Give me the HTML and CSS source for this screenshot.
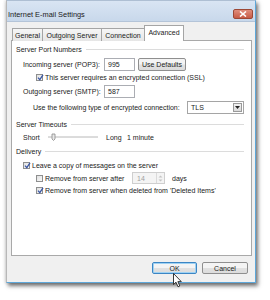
FILE: index.html
```html
<!DOCTYPE html>
<html>
<head>
<meta charset="utf-8">
<link rel="stylesheet" href="styles.css">
</head>
<body>
<div class="window">
  <div class="titlebar">
    <span class="title">Internet E-mail Settings</span>
    <span class="close"><svg width="8" height="6" viewBox="0 0 8 6"><path d="M1 0.5 L7 5.5 M7 0.5 L1 5.5" stroke="#fff" stroke-width="1.6"/></svg></span>
  </div>
  <div class="body">
    <div class="tabs">
      <div class="tab t1">General</div>
      <div class="tab t2">Outgoing Server</div>
      <div class="tab t3">Connection</div>
      <div class="tab sel">Advanced</div>
    </div>
    <div class="panel">
      <div class="group g1"><span>Server Port Numbers</span><i></i></div>
      <div class="row r-in">
        <span class="lbl">Incoming server (POP3):</span>
        <span class="input">995</span>
        <span class="btn small">Use Defaults</span>
      </div>
      <div class="row r-ssl ind2">
        <span class="cb on"><svg width="7" height="7" viewBox="0 0 7 7"><path d="M1 3.6 L2.8 5.6 L6 0.8" fill="none" stroke="#3a57a4" stroke-width="1.3"/></svg></span>
        <span>This server requires an encrypted connection (SSL)</span>
      </div>
      <div class="row r-out">
        <span class="lbl">Outgoing server (SMTP):</span>
        <span class="input">587</span>
      </div>
      <div class="row r-enc">
        <span class="enc-lbl">Use the following type of encrypted connection:</span>
        <span class="select"><span class="val">TLS</span><span class="drop"><svg width="5" height="3" viewBox="0 0 5 3"><path d="M0 0 H5 L2.5 3 Z" fill="#222"/></svg></span></span>
      </div>
      <div class="group g2"><span>Server Timeouts</span><i></i></div>
      <div class="row r-slider">
        <span class="short">Short</span>
        <span class="slider"><svg width="50" height="8" viewBox="0 0 50 8"><line x1="0" y1="4" x2="50" y2="4" stroke="#b8b8b8" stroke-width="1"/><path d="M4 1 V6 L5.5 7.5 L7 6 V1 Z" fill="#e8e8e8" stroke="#8a8a8a" stroke-width="0.8"/></svg></span>
        <span class="long">Long</span>
        <span>1 minute</span>
      </div>
      <div class="group g3"><span>Delivery</span><i></i></div>
      <div class="row r-leave ind1">
        <span class="cb on"><svg width="7" height="7" viewBox="0 0 7 7"><path d="M1 3.6 L2.8 5.6 L6 0.8" fill="none" stroke="#3a57a4" stroke-width="1.3"/></svg></span>
        <span>Leave a copy of messages on the server</span>
      </div>
      <div class="row r-after ind2">
        <span class="cb"></span>
        <span class="after-lbl">Remove from server after</span>
        <span class="spin"><span class="sval">14</span><span class="arrows"><svg width="5" height="9" viewBox="0 0 5 9"><path d="M0.5 3.5 L2.5 1.5 L4.5 3.5 Z M0.5 5.5 L2.5 7.5 L4.5 5.5 Z" fill="#c4c4c4"/></svg></span></span>
        <span class="days">days</span>
      </div>
      <div class="row r-del ind2">
        <span class="cb on"><svg width="7" height="7" viewBox="0 0 7 7"><path d="M1 3.6 L2.8 5.6 L6 0.8" fill="none" stroke="#3a57a4" stroke-width="1.3"/></svg></span>
        <span>Remove from server when deleted from 'Deleted Items'</span>
      </div>
    </div>
    <div class="buttons">
      <span class="btn ok">OK</span>
      <span class="btn cancel">Cancel</span>
    </div>
  </div>
  <svg class="cursor" width="10" height="15" viewBox="0 0 10 15"><path d="M0.5 0.5 V11.5 L3 9.2 L5 13.8 L6.8 13 L4.9 8.6 L8.3 8.6 Z" fill="#fff" stroke="#222" stroke-width="0.9" stroke-linejoin="round"/></svg>
</div>
</body>
</html>
```
FILE: styles.css
```css
html, body {
  margin: 0;
  padding: 0;
  background: #fff;
  width: 270px;
  height: 300px;
  overflow: hidden;
}
body {
  font-family: "Liberation Sans", Arial, sans-serif;
  font-size: 7px;
  color: #222;
}
.window {
  position: relative;
  margin-left: 6px;
  width: 250px;
  height: 283px;
  box-sizing: border-box;
  border: 1px solid;
  border-color: #aebfd3 #5da7d9 #5da7d9 #b8b8b8;
  background: #f0f0f0;
  box-shadow: 2px 3px 4px rgba(0,0,0,0.55), -1px 0 3px rgba(0,0,0,0.15);
  display: flex;
  flex-direction: column;
}
.titlebar {
  height: 21px;
  box-sizing: border-box;
  padding: 6px 2px 0 1px;
  display: flex;
  align-items: center;
  background: linear-gradient(#d9e5f3, #c8d8eb);
  border-bottom: 1px solid #b4c4d8;
}
.title {
  font-size: 7.4px;
  color: #1a1a1a;
}
.close {
  margin-left: auto;
  width: 20px;
  height: 10px;
  border-radius: 2px;
  background: linear-gradient(#e08d7c, #c75b46);
  border: 1px solid #9c4836;
  box-sizing: border-box;
  display: flex;
  align-items: center;
  justify-content: center;
}
.body {
  flex: 1;
  display: flex;
  flex-direction: column;
  padding: 3px 3px 0 4px;
}
.tabs {
  display: flex;
  height: 16px;
  margin-left: 1px;
  align-items: flex-end;
  position: relative;
  z-index: 2;
  margin-bottom: -1px;
}
.tab {
  height: 13px;
  box-sizing: border-box;
  border: 1px solid #a5a5a5;
  border-bottom: none;
  background: linear-gradient(#f6f6f6, #e6e6e6);
  display: flex;
  align-items: center;
  justify-content: center;
  margin-right: -1px;
}
.t1 { width: 31px; }
.t2 { width: 60px; }
.t3 { width: 44px; }
.tab.sel {
  width: 40px;
  height: 16px;
  background: #fff;
  padding-bottom: 2px;
}
.panel {
  height: 216px;
  box-sizing: border-box;
  border: 1px solid #a9a9a9;
  background: #fff;
  padding: 0 7px 0 4px;
  display: flex;
  flex-direction: column;
}
.group {
  display: flex;
  align-items: center;
  height: 10px;
}
.group i {
  flex: 1;
  height: 0;
  border-top: 1px solid #dcdcdc;
  margin-left: 4px;
}
.g1 { margin-top: 3px; }
.g2 { margin-top: 5px; }
.g3 { margin-top: 4px; }
.row {
  display: flex;
  align-items: center;
  padding-left: 7px;
}
.ind1 { padding-left: 7px; }
.ind2 { padding-left: 20px; }
.lbl { width: 81px; }
.input {
  width: 31px;
  height: 13px;
  box-sizing: border-box;
  border: 1px solid #abadb3;
  background: #fff;
  padding-left: 3px;
  display: flex;
  align-items: center;
}
.btn {
  box-sizing: border-box;
  border: 1px solid #8f8f8f;
  border-radius: 2px;
  background: linear-gradient(#f4f4f4 45%, #e1e1e1 55%, #dcdcdc);
  display: flex;
  align-items: center;
  justify-content: center;
}
.btn.small {
  width: 48px;
  height: 13px;
  margin-left: 3px;
  margin-top: 1px;
}
.r-in { margin-top: 3px; height: 14px; }
.r-ssl { margin-top: 1px; height: 11px; }
.r-out { margin-top: 2px; height: 13px; }
.r-enc { margin-top: 3px; height: 13px; padding-left: 17px; }
.enc-lbl { flex: 1; }
.select {
  width: 57px;
  height: 13px;
  box-sizing: border-box;
  border: 1px solid #a5a5a5;
  background: #fff;
  display: flex;
  align-items: center;
}
.select .val { flex: 1; padding-left: 3px; }
.drop {
  width: 9px;
  height: 9px;
  margin-right: 1px;
  box-sizing: border-box;
  border: 1px solid #9a9a9a;
  background: linear-gradient(#f2f2f2, #dadada);
  display: flex;
  align-items: center;
  justify-content: center;
}
.r-slider { margin-top: 3px; height: 10px; }
.short { width: 25px; }
.slider { width: 50px; height: 8px; display: flex; }
.long { margin-left: 8px; width: 21px; }
.r-leave { margin-top: 4px; height: 10px; }
.r-after { margin-top: 2px; height: 12px; }
.r-del { margin-top: 1px; height: 10px; }
.cb {
  width: 7px;
  height: 7px;
  box-sizing: border-box;
  border: 1px solid #8e8f8f;
  background: linear-gradient(135deg, #e0e0e0, #fafafa);
  margin-right: 2px;
  display: flex;
  align-items: center;
  justify-content: center;
  position: relative;
}
.cb svg { position: absolute; left: 0; top: -1px; }
.after-lbl { width: 87px; }
.spin {
  width: 33px;
  height: 12px;
  box-sizing: border-box;
  border: 1px solid #cfcfcf;
  background: #f4f4f4;
  display: flex;
  align-items: center;
}
.sval { flex: 1; padding-left: 4px; color: #a0a0a0; }
.arrows {
  width: 7px;
  height: 10px;
  border-left: 1px solid #dadada;
  display: flex;
  align-items: center;
  justify-content: center;
}
.days { margin-left: 7px; }
.buttons {
  display: flex;
  justify-content: flex-end;
  gap: 5px;
  padding-right: 4px;
  margin-top: 6px;
}
.btn.ok {
  width: 45px;
  height: 12px;
  border: 1px solid #3c86c4;
  box-shadow: inset 0 0 0 1px #9fd2f3;
}
.btn.cancel {
  width: 46px;
  height: 12px;
}
.cursor {
  position: absolute;
  left: 166px;
  top: 272px;
}
```
